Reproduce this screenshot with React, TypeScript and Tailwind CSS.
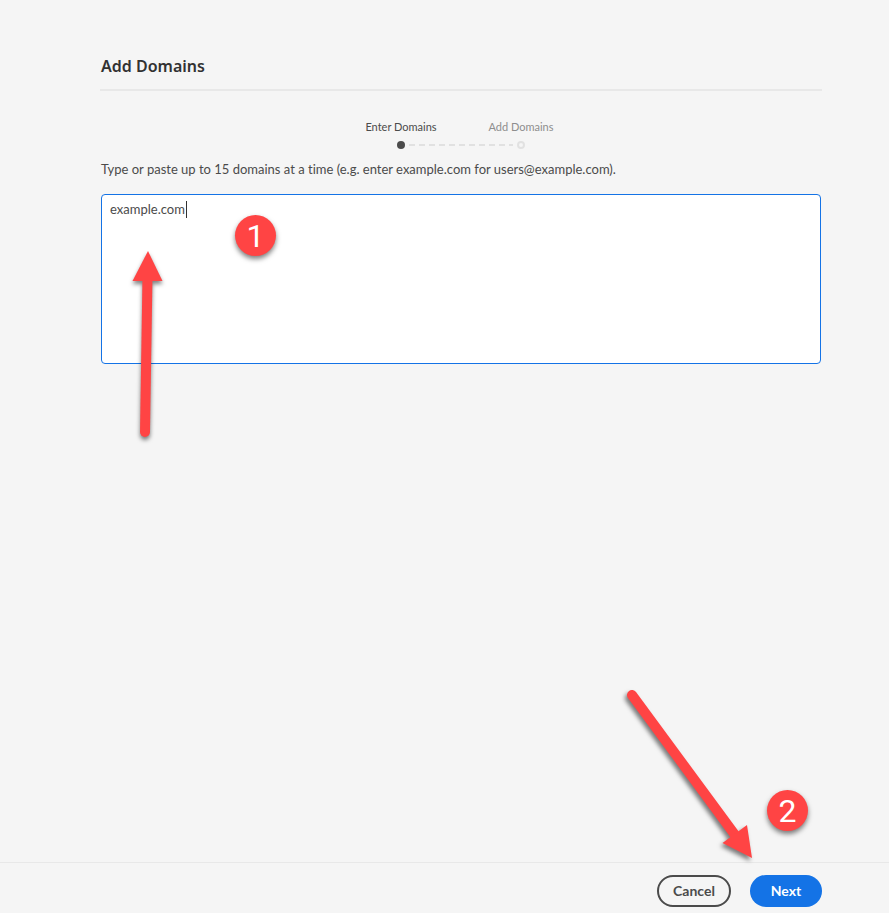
import { useState } from "react";

const Badge = ({ value, className }: { value: number; className: string }) => {
  return (
    <span
      className={`pointer-events-none absolute flex size-[41px] items-center justify-center rounded-full bg-[#ff4444] font-['Roboto',sans-serif] text-[32px] leading-8 text-white shadow-[0_3px_5px_rgba(0,0,0,0.5)] ${className}`}
    >
      {value}
    </span>
  );
};

const StepList = () => {
  return (
    <div className="flex flex-col items-center">
      <ol className="flex text-center text-[11px] leading-4">
        <li aria-current="step" className="w-[120px] text-[#4b4b4b]">
          Enter Domains
        </li>
        <li className="w-[120px] text-[#8e8e8e]">Add Domains</li>
      </ol>
      <svg width="130" height="10" className="mt-[5px]" aria-hidden="true">
        <path
          d="M13 5H117"
          stroke="#e1e1e1"
          strokeWidth="2"
          strokeDasharray="6 4"
        />
        <circle cx="5" cy="5" r="4" fill="#4b4b4b" />
        <circle
          cx="125"
          cy="5"
          r="3"
          fill="none"
          stroke="#e1e1e1"
          strokeWidth="2"
        />
      </svg>
    </div>
  );
};

const UpArrow = () => {
  return (
    <svg
      width="50"
      height="200"
      viewBox="0 0 50 200"
      aria-hidden="true"
      className="pointer-events-none absolute top-[52px] left-[22px] drop-shadow-[0_3px_2px_rgba(0,0,0,0.5)]"
    >
      <path
        d="M24.5 30L22 186"
        stroke="#ff4444"
        strokeWidth="10"
        strokeLinecap="round"
      />
      <path d="M25 5L39.500 35H9.500Z" fill="#ff4444" />
    </svg>
  );
};

const DownArrow = () => {
  return (
    <svg
      width="150"
      height="190"
      viewBox="0 0 150 190"
      aria-hidden="true"
      className="pointer-events-none absolute right-[119px] bottom-[38px] drop-shadow-[-2px_3px_2px_rgba(0,0,0,0.5)]"
    >
      <path
        d="M12 10L118 154"
        stroke="#ff4444"
        strokeWidth="10"
        strokeLinecap="round"
      />
      <path d="M132 173L102.500 158L127 140Z" fill="#ff4444" />
    </svg>
  );
};

export default function App() {
  const [domains, setDomains] = useState("example.com");

  return (
    <div className="flex min-h-screen flex-col bg-[#f5f5f5] font-['Lato',sans-serif] text-[13px] text-[#4b4b4b] [font-variant-ligatures:none]">
      <main className="mr-[68px] ml-[101px] flex-1 pt-[54px]">
        <h1 className="-mx-px border-b-2 border-[#e8e8e8] px-px pb-[11px] font-['Noto_Sans',sans-serif] text-base leading-6 font-semibold text-[#323232]">
          Add Domains
        </h1>
        <div className="pt-7">
          <StepList />
        </div>
        <label htmlFor="domains" className="mt-[9px] block leading-5">
          Type or paste up to 15 domains at a time (e.g. enter example.com for
          users@example.com).
        </label>
        <div className="relative mt-[15px]">
          <textarea
            id="domains"
            value={domains}
            onChange={(e) => setDomains(e.target.value)}
            className="block h-[170px] w-full resize-none rounded border border-[#1473e6] bg-white px-2 py-1 leading-5 outline-none"
          />
          <span className="pointer-events-none absolute top-[7px] left-[85px] h-[17px] w-px bg-[#323232]" />
          <Badge value={1} className="top-[21px] left-[134px]" />
          <UpArrow />
        </div>
      </main>
      <footer className="relative flex justify-end gap-[19px] border-t border-[#e8e8e8] pt-3 pr-[67px] pb-[6px] text-sm">
        <button
          type="button"
          className="h-8 w-[74px] rounded-full border-2 border-[#4b4b4b] font-bold"
        >
          Cancel
        </button>
        <button
          type="button"
          className="h-8 w-[72px] rounded-full bg-[#1473e6] font-bold text-white"
        >
          Next
        </button>
        <Badge value={2} className="right-[81px] bottom-[82px]" />
        <DownArrow />
      </footer>
    </div>
  );
}
